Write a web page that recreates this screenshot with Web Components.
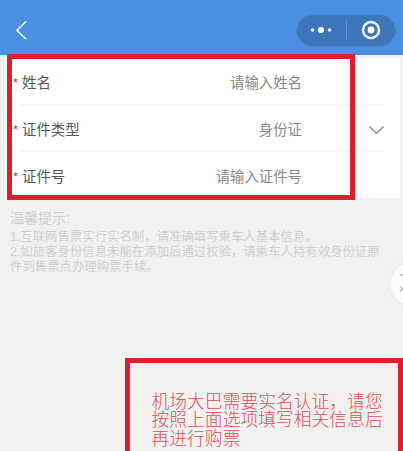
<!DOCTYPE html>
<html lang="zh">
<head>
<meta charset="utf-8">
<title>实名认证</title>
<style>
  html, body { margin: 0; height: 100%; }
  body {
    width: 403px; height: 451px; overflow: hidden; position: relative;
    background: #f1f1f1; color: #555;
    font-family: "Liberation Sans", "Noto Sans CJK SC", sans-serif;
  }
</style>
</head>
<body>
<app-header></app-header>
<form-card>
  <form-row label="姓名" value="请输入姓名"></form-row>
  <form-row label="证件类型" value="身份证" select></form-row>
  <form-row label="证件号" value="请输入证件号" last></form-row>
</form-card>
<tip-block title="温馨提示:">
  <div>1.互联网售票实行实名制，请准确填写乘车人基本信息。</div>
  <div>2.如旅客身份信息未能在添加后通过校验，请乘车人持有效身份证原件到售票点办理购票手续。</div>
</tip-block>
<float-tab></float-tab>
<mark-box style="left:7px;top:54px;width:348px;height:146px"></mark-box>
<mark-box style="left:125px;top:358px;width:278px;height:93px;border-bottom:0"></mark-box>
<mark-note>机场大巴需要实名认证，请您按照上面选项填写相关信息后再进行购票</mark-note>

<script>
class AppHeader extends HTMLElement {
  constructor() {
    super();
    this.attachShadow({ mode: 'open' });
    this.shadowRoot.innerHTML = `
      <style>
        :host { display: flex; align-items: center; justify-content: space-between; height: 55px; box-sizing: border-box; background: #4a90e2; padding: 5px 7px 0 15px; }
        svg { display: block; }
        .capsule { display: flex; align-items: center; width: 100px; height: 33px; box-sizing: border-box; border-radius: 17px; background: #3c75b9; border: 1px solid #4f86c8; }
        .part { flex: 1; display: flex; justify-content: center; }
        .line { width: 1px; height: 20px; background: #5a8fd0; }
      </style>
      <svg width="12" height="20" viewBox="0 0 12 20"><path d="M11 1.5 2 10.5l9 8.5" fill="none" stroke="#e8f4ff" stroke-width="1.7"/></svg>
      <div class="capsule">
        <div class="part"><svg width="24" height="8" viewBox="0 0 24 8"><circle cx="3.5" cy="4" r="1.8" fill="#eef5ff"/><circle cx="12" cy="4" r="3" fill="#fff"/><circle cx="20.5" cy="4" r="1.8" fill="#eef5ff"/></svg></div>
        <div class="line"></div>
        <div class="part"><svg width="20" height="20" viewBox="0 0 20 20"><circle cx="10" cy="10" r="8" fill="none" stroke="#eef5ff" stroke-width="2.4"/><circle cx="10" cy="10" r="3.4" fill="#fff"/></svg></div>
      </div>`;
  }
}

class FormCard extends HTMLElement {
  constructor() {
    super();
    this.attachShadow({ mode: 'open' });
    this.shadowRoot.innerHTML = `
      <style>
        :host { display: block; margin: 3px 3px 0 6px; background: #fff; padding: 0 16px 0 14px; }
      </style>
      <slot></slot>`;
  }
}

class FormRow extends HTMLElement {
  constructor() {
    super();
    this.attachShadow({ mode: 'open' });
  }
  connectedCallback() {
    const last = this.hasAttribute('last');
    const select = this.hasAttribute('select');
    this.shadowRoot.innerHTML = `
      <style>
        :host { display: flex; align-items: center; height: 46px; padding-left: 2px; font-size: 14.4px; position: relative; border-bottom: ${last ? 0 : '1px solid #f3f3f3'}; }
        .star { position: absolute; left: -7px; top: 17px; color: #c8323c; font-size: 13px; }
        .label { color: #555; flex: 1; }
        .value { color: #888; white-space: nowrap; margin-right: 82px; }
        svg { position: absolute; right: 0; top: 21px; }
      </style>
      <span class="star">*</span>
      <span class="label">${this.getAttribute('label')}</span>
      <span class="value">${this.getAttribute('value')}</span>
      ${select ? '<svg width="15" height="8" viewBox="0 0 15 8"><path d="M.5.5l7 7 7-7" fill="none" stroke="#777" stroke-width="1.1"/></svg>' : ''}`;
  }
}

class TipBlock extends HTMLElement {
  constructor() {
    super();
    this.attachShadow({ mode: 'open' });
    this.shadowRoot.innerHTML = `
      <style>
        :host { display: block; padding: 11px 14px 0 10px; color: #cfcfcf; font-size: 12.4px; line-height: 15px; }
        .title { font-size: 14px; line-height: 18px; margin-bottom: 2.5px; }
      </style>
      <div class="title">${this.getAttribute('title')}</div>
      <slot></slot>`;
  }
}

class FloatTab extends HTMLElement {
  constructor() {
    super();
    this.attachShadow({ mode: 'open' });
    this.shadowRoot.innerHTML = `
      <style>
        :host { position: absolute; left: 386px; top: 259px; width: 17px; height: 50px; overflow: hidden; }
        .disc { position: absolute; left: 4px; top: 4px; width: 42px; height: 42px; border-radius: 50%; background: #fafafa; box-shadow: 0 0 3px #e4e4e4; }
        svg { position: absolute; left: 14px; top: 15px; }
      </style>
      <div class="disc"></div>
      <svg width="3" height="18" viewBox="0 0 3 18"><path d="M0 1h3M0 13l3 2-3 2" fill="none" stroke="#999" stroke-width="1"/></svg>`;
  }
}

// red annotations drawn over the screenshot
class MarkBox extends HTMLElement {
  constructor() {
    super();
    this.attachShadow({ mode: 'open' });
    this.shadowRoot.innerHTML = `
      <style>
        :host { position: absolute; box-sizing: border-box; border: 5px solid #dd1f2b; }
      </style>`;
  }
}

class MarkNote extends HTMLElement {
  constructor() {
    super();
    this.attachShadow({ mode: 'open' });
    this.shadowRoot.innerHTML = `
      <style>
        :host { position: absolute; left: 151.5px; top: 390.5px; width: 234px; color: #d85058; font-size: 17.8px; line-height: 18.5px; font-family: "Noto Sans CJK SC", sans-serif; font-weight: 300; }
      </style>
      <slot></slot>`;
  }
}

customElements.define('app-header', AppHeader);
customElements.define('form-card', FormCard);
customElements.define('form-row', FormRow);
customElements.define('tip-block', TipBlock);
customElements.define('float-tab', FloatTab);
customElements.define('mark-box', MarkBox);
customElements.define('mark-note', MarkNote);
</script>
</body>
</html>
